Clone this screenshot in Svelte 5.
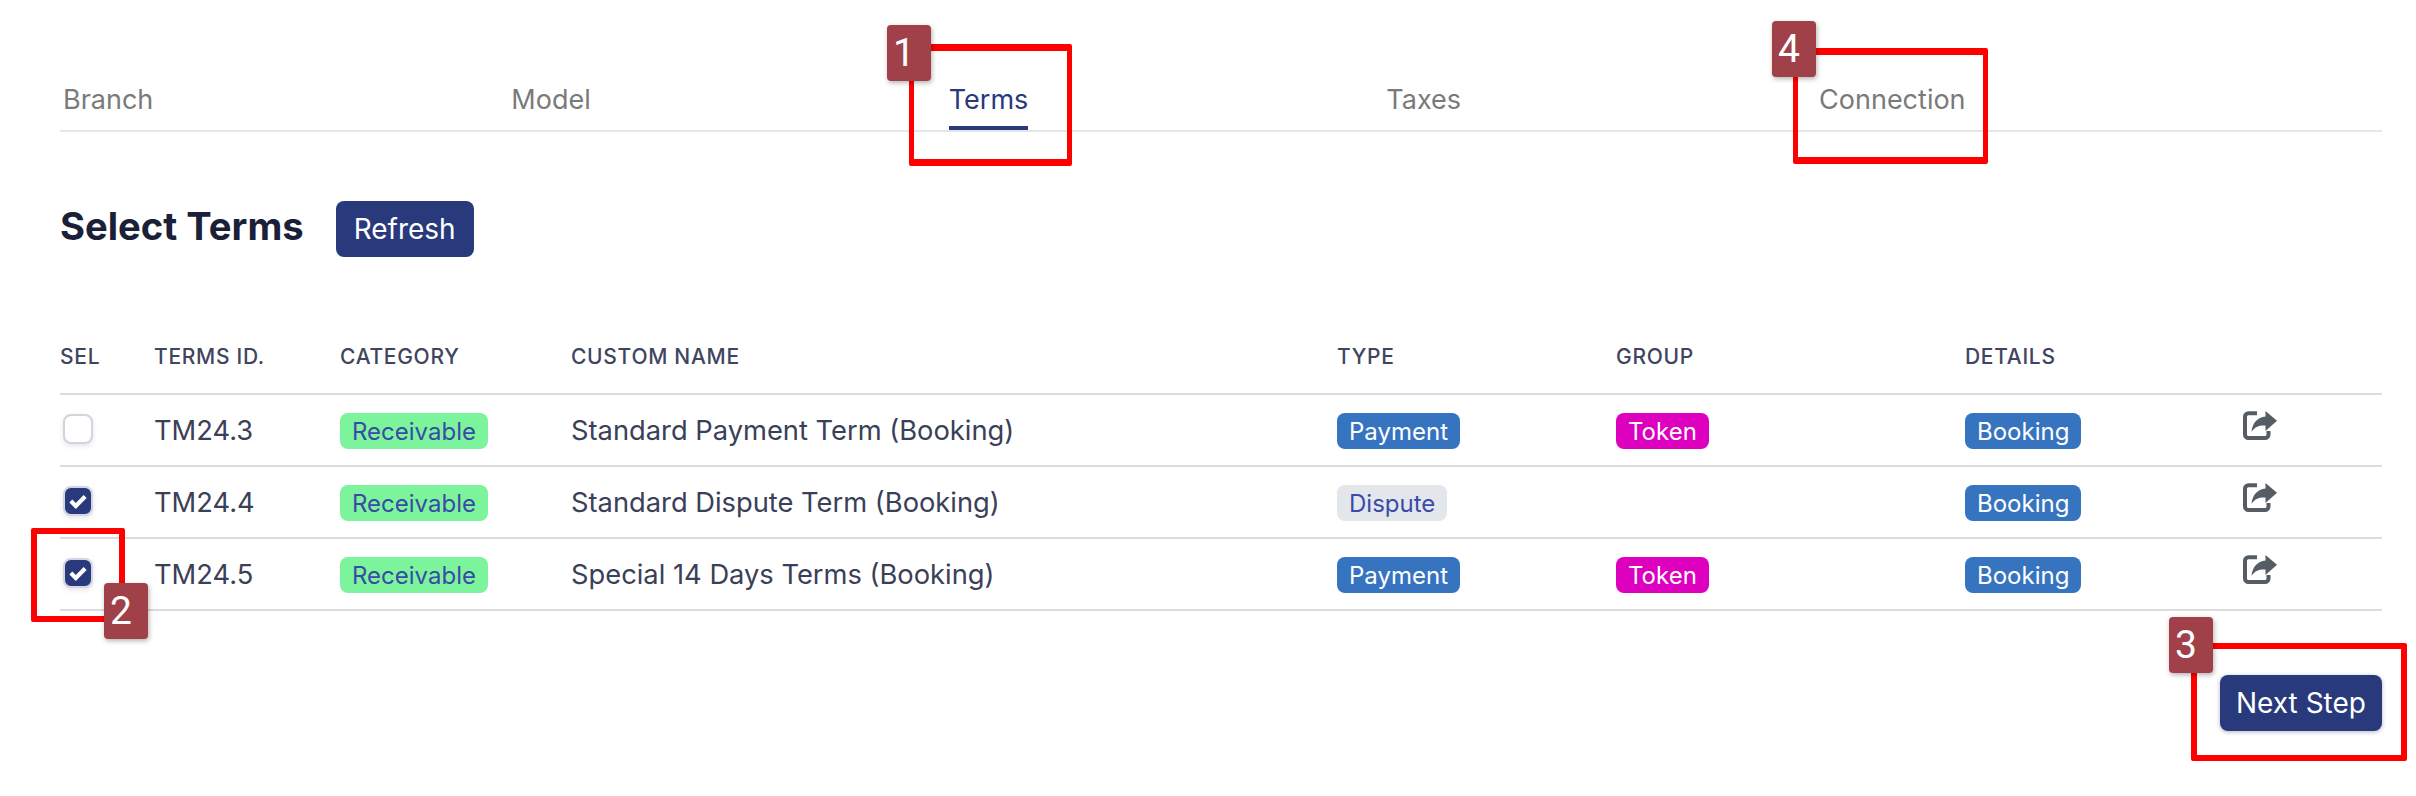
<script lang="ts">
  const tabs = ['Branch', 'Model', 'Terms', 'Taxes', 'Connection'];

  const rows = [
    { id: 'TM24.3', name: 'Standard Payment Term (Booking)', type: 'Payment', group: 'Token', checked: false },
    { id: 'TM24.4', name: 'Standard Dispute Term (Booking)', type: 'Dispute', group: '', checked: true },
    { id: 'TM24.5', name: 'Special 14 Days Terms (Booking)', type: 'Payment', group: 'Token', checked: true },
  ];

  const headers = ['Sel', 'Terms Id.', 'Category', 'Custom Name', 'Type', 'Group', 'Details', ''];

  // red callouts drawn on top of the screenshot
  const callouts = [
    { n: 1, box: 'box-1', tag: 'tag-1' },
    { n: 2, box: 'box-2', tag: 'tag-2' },
    { n: 3, box: 'box-3', tag: 'tag-3' },
    { n: 4, box: 'box-4', tag: 'tag-4' },
  ];
</script>

<div class="page">
  <nav class="tabs">
    {#each tabs as tab}
      <div class="tab" class:active={tab === 'Terms'}>{tab}</div>
    {/each}
  </nav>

  <div class="title-row">
    <h2>Select Terms</h2>
    <button class="btn refresh">Refresh</button>
  </div>

  <table>
    <thead>
      <tr>
        {#each headers as h}
          <th>{h}</th>
        {/each}
      </tr>
    </thead>
    <tbody>
      {#each rows as row}
        <tr>
          <td>
            <span class="check" class:on={row.checked}>
              {#if row.checked}
                <svg viewBox="0 0 20 20" width="22" height="22"><path d="M3.5 10 8 14.5 16.5 6" fill="none" stroke="#fff" stroke-width="3.8"/></svg>
              {/if}
            </span>
          </td>
          <td>{row.id}</td>
          <td><span class="pill green">Receivable</span></td>
          <td>{row.name}</td>
          <td><span class="pill" class:blue={row.type === 'Payment'} class:grey={row.type === 'Dispute'}>{row.type}</span></td>
          <td>
            {#if row.group}
              <span class="pill magenta">{row.group}</span>
            {/if}
          </td>
          <td><span class="pill blue">Booking</span></td>
          <td class="icon-cell">
            <svg viewBox="0 0 34 29" width="34" height="29">
              <path d="M14 2.2H5.5A3.5 3.5 0 0 0 2 5.7V23.5A3.5 3.5 0 0 0 5.5 27H22a3.5 3.5 0 0 0 3.5-3.5V20" fill="none" stroke="#555c63" stroke-width="4"/>
              <path d="M22.5 0 34 9.8 22.5 20V14.5C16 14.2 12 15.5 8.5 21 9 12.5 14.5 6 22.5 5.4Z" fill="#555c63"/>
            </svg>
          </td>
        </tr>
      {/each}
    </tbody>
  </table>

  <div class="actions">
    <button class="btn next">Next Step</button>
  </div>

  {#each callouts as c}
    <div class="red-box {c.box}"></div>
    <div class="tag {c.tag}">{c.n}</div>
  {/each}
</div>

<style>
  :global(body) {
    margin: 0;
    background: #fff;
    font-family: Inter, "Liberation Sans", sans-serif;
  }

  .page {
    position: relative;
    width: 2416px;
    height: 796px;
    padding: 72px 34px 0 60px;
    box-sizing: border-box;
    overflow: hidden;
  }

  .tabs {
    display: flex;
    gap: 358px;
    height: 58px;
    padding-left: 3px;
    border-bottom: 2px solid #e3e7ec;
  }
  .tab {
    height: 54px;
    font-size: 27px;
    line-height: 56px;
    color: #7a7a7a;
  }
  .tab.active {
    color: #28397c;
    border-bottom: 4px solid #28397c;
  }

  .title-row {
    display: flex;
    align-items: center;
    gap: 32px;
    margin-top: 69px;
    height: 56px;
  }
  h2 {
    margin: 0;
    padding-bottom: 6px;
    font-size: 38.2px;
    font-weight: 700;
    color: #1a2038;
  }

  .btn {
    border: 0;
    border-radius: 8px;
    background: #28397c;
    color: #fff;
    font-family: inherit;
    font-size: 28px;
    padding: 0;
  }
  .refresh { width: 138px; height: 56px; }

  table {
    width: 100%;
    margin-top: 72px;
    border-collapse: collapse;
    table-layout: fixed;
    color: #3a4058;
  }
  th {
    height: 65px;
    padding: 0 0 10px;
    box-sizing: border-box;
    border-bottom: 2px solid #dcdcdc;
    text-align: left;
    text-transform: uppercase;
    font-size: 21px;
    font-weight: 500;
    letter-spacing: 0.7px;
    color: #3f455e;
  }
  th:nth-child(1) { width: 94px; }
  th:nth-child(2) { width: 186px; }
  th:nth-child(3) { width: 231px; }
  th:nth-child(4) { width: 766px; }
  th:nth-child(5) { width: 279px; }
  th:nth-child(6) { width: 349px; }
  th:nth-child(7) { width: 278px; }

  td {
    height: 72px;
    padding: 0;
    box-sizing: border-box;
    border-bottom: 2px solid #dcdcdc;
    font-size: 27.3px;
    vertical-align: middle;
  }

  .pill {
    display: inline-block;
    height: 36px;
    margin-top: 2px;
    line-height: 38px;
    padding: 0 12px;
    border-radius: 8px;
    font-size: 24px;
    font-weight: 400;
    vertical-align: middle;
  }
  .green { background: #7cf49c; color: #3b4aa8; }
  .blue { background: #3674c0; color: #fff; }
  .grey { background: #e3e7ec; color: #3b4aa8; }
  .magenta { background: #de00bf; color: #fff; }

  .check {
    display: flex;
    align-items: center;
    justify-content: center;
    width: 30px;
    height: 30px;
    margin: -2px 0 0 3px;
    box-sizing: border-box;
    border: 2px solid #d4d4de;
    border-radius: 8px;
    background: #fff;
    box-shadow: 0 2px 5px rgba(40, 40, 80, 0.12);
  }
  .check.on {
    background: #28397c;
    border-color: #d4d4e4;
  }

  .icon-cell svg {
    display: block;
    margin: -10px 0 0 0;
  }

  .actions {
    display: flex;
    justify-content: flex-end;
    margin-top: 64px;
  }
  .next {
    width: 162px;
    height: 56px;
    box-shadow: 0 1px 4px rgba(40, 40, 80, 0.35);
  }

  .red-box {
    position: absolute;
    box-sizing: border-box;
    border: 6px solid #ff0000;
    border-radius: 2px;
  }
  .box-1 { left: 909px; top: 44px; width: 163px; height: 122px; border-width: 7px 5px; }
  .box-2 { left: 31px; top: 528px; width: 94px; height: 94px; }
  .box-3 { left: 2191px; top: 643px; width: 216px; height: 118px; }
  .box-4 { left: 1793px; top: 48px; width: 195px; height: 116px; border-width: 7px 5px; }

  .tag {
    position: absolute;
    width: 44px;
    height: 56px;
    padding-right: 10px;
    box-sizing: border-box;
    border-radius: 4px;
    background: #a04149;
    color: #fff;
    font-family: Roboto, sans-serif;
    font-size: 39px;
    line-height: 56px;
    text-align: center;
    box-shadow: 1px 2px 5px rgba(0, 0, 0, 0.3);
  }
  .tag-1 { left: 887px; top: 25px; }
  .tag-2 { left: 104px; top: 583px; }
  .tag-3 { left: 2169px; top: 617px; }
  .tag-4 { left: 1772px; top: 21px; }
</style>
